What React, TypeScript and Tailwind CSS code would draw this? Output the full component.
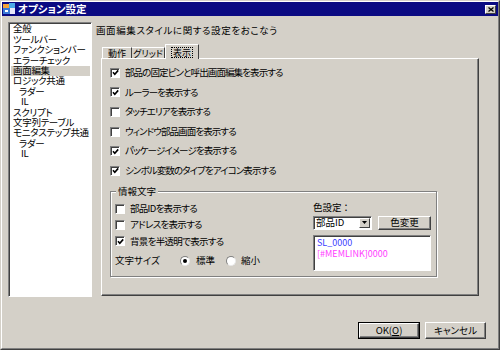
import React from "react";

const font = { fontFamily: '"Noto Sans CJK JP", "Liberation Sans", sans-serif' };

const Check = ({ on }: { on: boolean }) => (
  <span className="w-[10px] h-[10px] bg-white border border-t-[#808080] border-l-[#808080] border-r-[#ffffff] border-b-[#ffffff] shadow-[inset_1px_1px_0_#404040] flex items-center justify-center shrink-0">
    {on && (
      <svg width="7" height="7" viewBox="0 0 7 7">
        <path d="M1 3.2 L2.8 5.2 L6.2 1.4" stroke="#000" strokeWidth="1.6" fill="none" />
      </svg>
    )}
  </span>
);

const Radio = ({ on }: { on: boolean }) => (
  <span className="w-[10px] h-[10px] rounded-full bg-white border border-t-[#808080] border-l-[#808080] border-r-[#e8e8e8] border-b-[#e8e8e8] flex items-center justify-center shrink-0">
    {on && <span className="w-[4px] h-[4px] rounded-full bg-black" />}
  </span>
);

const CheckRow = ({ on, label }: { on: boolean; label: string }) => (
  <div className="flex items-center gap-[5px] h-[19.6px]">
    <Check on={on} />
    <span className="text-[9.5px] tracking-[-0.9px] leading-none whitespace-nowrap">{label}</span>
  </div>
);

const Button = ({ label, main }: { label: React.ReactNode; main?: boolean }) => (
  <div className={main ? "border border-black h-full" : "h-full"}>
    <div className="bg-[#d4d0c8] border border-t-white border-l-white border-r-[#404040] border-b-[#404040] shadow-[inset_-1px_-1px_0_#808080] flex items-center justify-center text-[9.5px] whitespace-nowrap h-full">
      {label}
    </div>
  </div>
);

const treeItems: [string, number, boolean?][] = [
  ["全般", 0],
  ["ツールバー", 0],
  ["ファンクションバー", 0],
  ["エラーチェック", 0],
  ["画面編集", 0, true],
  ["ロジック共通", 0],
  ["ラダー", 6],
  ["IL", 8],
  ["スクリプト", 0],
  ["文字列テーブル", 0],
  ["モニタステップ共通", 0],
  ["ラダー", 6],
  ["IL", 8],
];

export default function App() {
  return (
    <div style={font} className="w-[500px] h-[350px] bg-[#d4d0c8] text-black [font-feature-settings:'palt'] border border-t-[#d4d0c8] border-l-[#d4d0c8] border-r-[#404040] border-b-[#404040] overflow-hidden">
      <div className="w-full h-full border border-t-white border-l-white border-r-[#808080] border-b-[#808080] flex flex-col">
        {/* title bar */}
        <div className="h-[14px] bg-[#0a0a82] flex items-center pl-[1px] pr-[2px]">
          <svg width="13" height="12" viewBox="0 0 13 12">
            <rect x="0" y="1" width="6" height="4" fill="#f2a23a" />
            <rect x="6" y="0" width="6" height="5" fill="#4aa8e8" />
            <rect x="0" y="5" width="7" height="6" fill="#3a7ad8" />
            <rect x="7" y="5" width="5" height="6" fill="#e8e8f8" />
            <rect x="2" y="7" width="3" height="2" fill="#fff" />
          </svg>
          <span className="text-white font-bold text-[10.5px] ml-[2px] whitespace-nowrap">オプション設定</span>
          <div className="ml-auto w-[11px] h-[9px] bg-[#d4d0c8] border border-t-white border-l-white border-r-[#404040] border-b-[#404040] flex items-center justify-center">
            <svg width="6" height="5" viewBox="0 0 6 5">
              <path d="M0.5 0.5 L5.5 4.5 M5.5 0.5 L0.5 4.5" stroke="#000" strokeWidth="1.3" />
            </svg>
          </div>
        </div>

        <div className="flex pl-[6px] pt-[6px]">
          {/* tree */}
          <div className="w-[84px] h-[275px] bg-white border border-t-[#808080] border-l-[#808080] border-r-white border-b-white shadow-[inset_1px_1px_0_#404040] pt-[1px] pl-[2px] pr-[1px] overflow-hidden">
            {treeItems.map(([t, ind, sel], i) => (
              <div key={i} className="h-[10.4px] flex items-center">
                <span
                  className={`text-[9.5px] tracking-[-0.3px] leading-none pl-[2px] w-full h-full flex items-center whitespace-nowrap ${sel ? "bg-[#d4d0c8]" : ""}`}
                >
                  <span style={{ paddingLeft: ind }}>{t}</span>
                </span>
              </div>
            ))}
          </div>

          {/* right side */}
          <div className="ml-[4px] flex flex-col">
            <div className="h-[16px] flex items-center text-[9.5px] tracking-[0.6px] whitespace-nowrap">画面編集スタイルに関する設定をおこなう</div>
            <div className="ml-[6px] mt-[6px] flex items-end h-[14px] relative z-10">
              <div className="w-[30px] h-[11px] border border-t-white border-l-white border-r-[#404040] border-b-0 flex items-center justify-center text-[9px] leading-none whitespace-nowrap">動作</div>
              <div className="w-[33px] h-[11px] border-t border-t-white border-r border-r-[#404040] flex items-center justify-center text-[9px] leading-none whitespace-nowrap">グリッド</div>
              <div className="w-[34px] h-[15px] -mb-[1px] bg-[#d4d0c8] border border-t-white border-l-white border-r-[#404040] border-b-0 flex items-center justify-center">
                <span className="border border-dotted border-black px-[1px] h-[11px] flex items-center text-[9px] leading-none whitespace-nowrap">表示</span>
              </div>
            </div>
            {/* tab panel */}
            <div className="ml-[5px] w-[378px] h-[238px] border border-t-white border-l-white border-r-[#404040] border-b-[#404040] shadow-[inset_-1px_-1px_0_#808080] pl-[8px] pt-[4px]">
              <CheckRow on label="部品の固定ピンと呼出画面編集を表示する" />
              <CheckRow on label="ルーラーを表示する" />
              <CheckRow on={false} label="タッチエリアを表示する" />
              <CheckRow on={false} label="ウィンドウ部品画面を表示する" />
              <CheckRow on label="パッケージイメージを表示する" />
              <CheckRow on label="シンボル変数のタイプをアイコン表示する" />

              {/* group box */}
              <div className="mt-[10px] w-[327px] h-[86px] border border-[#808080] shadow-[inset_1px_1px_0_#fff,1px_1px_0_#fff] relative flex">
                <span className="absolute -top-[7px] left-[5px] bg-[#d4d0c8] px-[2px] text-[9.5px] leading-[12px] whitespace-nowrap">情報文字</span>
                <div className="pl-[4px] pt-[9px] flex flex-col">
                  <div className="flex items-center gap-[5px] h-[16px]">
                    <Check on={false} />
                    <span className="text-[9.5px] tracking-[-0.7px] whitespace-nowrap">部品IDを表示する</span>
                  </div>
                  <div className="flex items-center gap-[5px] h-[16px]">
                    <Check on={false} />
                    <span className="text-[9.5px] tracking-[-0.7px] whitespace-nowrap">アドレスを表示する</span>
                  </div>
                  <div className="flex items-center gap-[5px] h-[17px]">
                    <Check on />
                    <span className="text-[9.5px] tracking-[-0.7px] whitespace-nowrap">背景を半透明で表示する</span>
                  </div>
                  <div className="flex items-center h-[20px] mt-[1px] text-[9.5px] whitespace-nowrap">
                    <span className="w-[65px]">文字サイズ</span>
                    <Radio on />
                    <span className="ml-[6px] w-[30px]">標準</span>
                    <Radio on={false} />
                    <span className="ml-[5px]">縮小</span>
                  </div>
                </div>
                <div className="ml-auto mr-[5px] pt-[9px] w-[118px] flex flex-col">
                  <div className="h-[14px] flex items-center text-[9.5px] whitespace-nowrap">色設定 ：</div>
                  <div className="flex mt-[1px] h-[14px]">
                    <div className="w-[59px] bg-white border border-t-[#808080] border-l-[#808080] border-r-white border-b-white shadow-[inset_1px_1px_0_#404040] flex items-center pl-[2px] pr-[1px]">
                      <span className="text-[9.5px] leading-none whitespace-nowrap">部品ID</span>
                      <div className="ml-auto w-[11px] h-[10px] bg-[#d4d0c8] border border-t-white border-l-white border-r-[#404040] border-b-[#404040] flex items-center justify-center">
                        <svg width="5" height="3" viewBox="0 0 5 3">
                          <path d="M0 0 H5 L2.5 3 Z" fill="#000" />
                        </svg>
                      </div>
                    </div>
                    <div className="ml-[6px] w-[53px] h-[14px]">
                      <Button label="色変更" />
                    </div>
                  </div>
                  <div className="mt-[5px] h-[36px] bg-white border border-t-[#808080] border-l-[#808080] border-r-white border-b-white shadow-[inset_1px_1px_0_#404040] pl-[3px] pt-[1px] text-[9px] leading-[11px] [font-feature-settings:normal]">
                    <div className="text-[#3c3cff]">SL_0000</div>
                    <div className="text-[#ff3cff]">[#MEMLINK]0000</div>
                  </div>
                </div>
              </div>
            </div>
          </div>
        </div>

        {/* buttons */}
        <div className="flex justify-end gap-[5px] mt-[25px] pr-[12px]">
          <div className="w-[62px] h-[17px]">
            <Button
              main
              label={
                <span>
                  OK(<span className="underline">O</span>)
                </span>
              }
            />
          </div>
          <div className="w-[61px] h-[17px]">
            <Button label="キャンセル" />
          </div>
        </div>
      </div>
    </div>
  );
}
